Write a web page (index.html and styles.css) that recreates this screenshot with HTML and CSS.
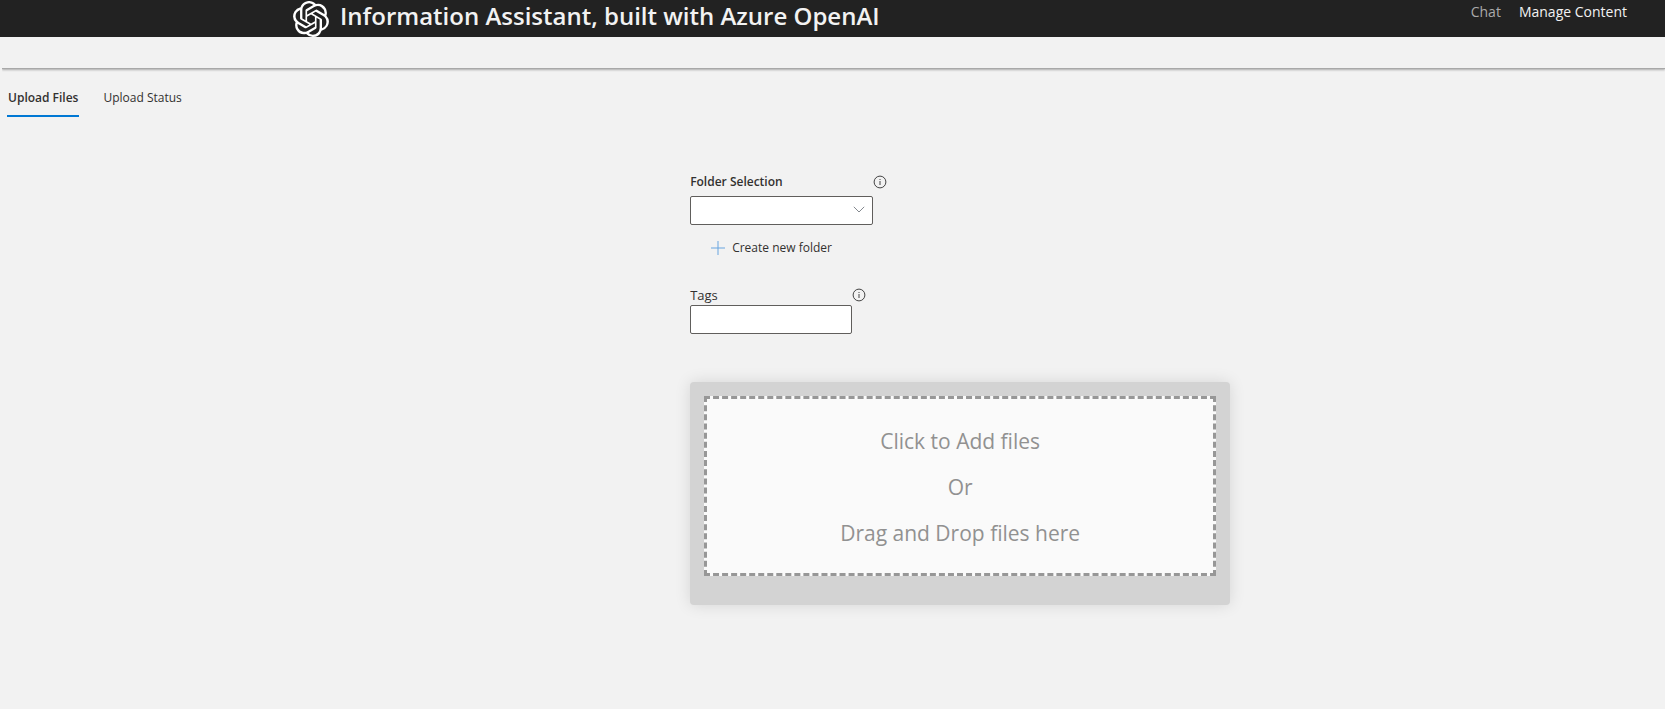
FILE: index.html
```html
<!DOCTYPE html>
<html lang="en">
<head>
<meta charset="utf-8">
<title>Information Assistant</title>
<link rel="stylesheet" href="styles.css">
</head>
<body>
<header class="header">
  <a class="brand" href="#">
    <svg class="logo" viewBox="0 0 24 24" aria-hidden="true"><path fill="currentColor" d="M22.2819 9.8211a5.9847 5.9847 0 0 0-.5157-4.9108 6.0462 6.0462 0 0 0-6.5098-2.9A6.0651 6.0651 0 0 0 4.9807 4.1818a5.9847 5.9847 0 0 0-3.9977 2.9 6.0462 6.0462 0 0 0 .7427 7.0966 5.98 5.98 0 0 0 .511 4.9107 6.051 6.051 0 0 0 6.5146 2.9001A5.9847 5.9847 0 0 0 13.2599 24a6.0557 6.0557 0 0 0 5.7718-4.2058 5.9894 5.9894 0 0 0 3.9977-2.9001 6.0557 6.0557 0 0 0-.7475-7.0729zm-9.022 12.6081a4.4755 4.4755 0 0 1-2.8764-1.0408l.1419-.0804 4.7783-2.7582a.7948.7948 0 0 0 .3927-.6813v-6.7369l2.02 1.1686a.071.071 0 0 1 .038.052v5.5826a4.504 4.504 0 0 1-4.4945 4.4944zm-9.6607-4.1254a4.4708 4.4708 0 0 1-.5346-3.0137l.142.0852 4.783 2.7582a.7712.7712 0 0 0 .7806 0l5.8428-3.3685v2.3324a.0804.0804 0 0 1-.0332.0615L9.74 19.9502a4.4992 4.4992 0 0 1-6.1408-1.6464zM2.3408 7.8956a4.485 4.485 0 0 1 2.3655-1.9728V11.6a.7664.7664 0 0 0 .3879.6765l5.8144 3.3543-2.0201 1.1685a.0757.0757 0 0 1-.071 0l-4.8303-2.7865A4.504 4.504 0 0 1 2.3408 7.872zm16.5963 3.8558L13.1038 8.364 15.1192 7.2a.0757.0757 0 0 1 .071 0l4.8303 2.7913a4.4944 4.4944 0 0 1-.6765 8.1042v-5.6772a.79.79 0 0 0-.407-.667zm2.0107-3.0231l-.142-.0852-4.7735-2.7818a.7759.7759 0 0 0-.7854 0L9.409 9.2297V6.8974a.0662.0662 0 0 1 .0284-.0615l4.8303-2.7866a4.4992 4.4992 0 0 1 6.6802 4.66zM8.3065 12.863l-2.02-1.1638a.0804.0804 0 0 1-.038-.0567V6.0742a4.4992 4.4992 0 0 1 7.3757-3.4537l-.142.0805L8.704 5.459a.7948.7948 0 0 0-.3927.6813zm1.0976-2.3654l2.602-1.4998 2.6069 1.4998v2.9994l-2.5974 1.4997-2.6067-1.4997Z"/></svg>
    <span class="title">Information Assistant, built with Azure OpenAI</span>
  </a>
  <nav class="nav">
    <a class="nav-link" href="#">Chat</a>
    <a class="nav-link nav-link-active" href="#">Manage Content</a>
  </nav>
</header>
<main>
  <div class="strip"></div>
  <div class="tabs" role="tablist">
    <button class="tab tab-active" role="tab" aria-selected="true">Upload Files</button>
    <button class="tab" role="tab" aria-selected="false">Upload Status</button>
  </div>
  <div class="form">
    <div class="field folder">
      <label class="label label-strong" for="folder">Folder Selection</label>
      <button class="info" aria-label="Folder information"><svg viewBox="0 0 14 14"><circle cx="7" cy="7" r="5.9"/><path d="M7 6v4M7 4v1"/></svg></button>
      <div class="select-wrap">
        <select class="box" id="folder"><option></option></select>
        <svg class="chevron" viewBox="0 0 12 7" aria-hidden="true"><path d="M.8.8 6 6 11.2.8"/></svg>
      </div>
    </div>
    <button class="create">
      <svg class="plus" viewBox="0 0 14 14" aria-hidden="true"><path d="M7 0v14M0 7h14"/></svg>
      Create new folder
    </button>
    <div class="field tags">
      <label class="label label-large" for="tags">Tags</label>
      <button class="info" aria-label="Tags information"><svg viewBox="0 0 14 14"><circle cx="7" cy="7" r="5.9"/><path d="M7 6v4M7 4v1"/></svg></button>
      <input class="box" id="tags" type="text">
    </div>
    <div class="drop-card">
      <button class="drop-zone">
        <span>Click to Add files</span>
        <span>Or</span>
        <span>Drag and Drop files here</span>
      </button>
    </div>
  </div>
</main>
</body>
</html>
```
FILE: styles.css
```css
* {
  box-sizing: border-box;
}

body {
  margin: 0;
  background: #f2f2f2;
  color: #323130;
  font-family: "Segoe UI", "Open Sans", "Noto Sans", sans-serif;
  font-size: 12px;
  line-height: 20px;
}

button {
  padding: 0;
  border: 0;
  background: none;
  color: inherit;
  font: inherit;
}

a {
  color: inherit;
  text-decoration: none;
}

.header {
  display: flex;
  justify-content: space-between;
  align-items: flex-start;
  padding: 0 38px 0 17.6%;
  background: #222;
  color: #f2f2f2;
}

.brand {
  display: flex;
  gap: 11px;
  padding-top: 1px;
}

.logo {
  display: block;
  width: 36px;
  height: 36px;
  color: #fff;
}

.title {
  font-size: 24px;
  font-weight: 600;
  line-height: 29px;
}

.nav {
  display: flex;
  gap: 18px;
  padding-top: 2px;
  font-size: 14px;
  font-weight: 500;
}

.nav-link {
  color: #aaa;
}

.nav-link-active {
  color: #f2f2f2;
}

.strip {
  height: 32px;
  margin-left: 2px;
  border-bottom: 1px solid #a8a8a8;
  box-shadow: 0 1px 2px #aaa;
  clip-path: inset(0 0 -4px 0);
}

.tabs {
  display: flex;
  gap: 23px;
  padding: 8px 7px 0;
}

.tab {
  height: 40px;
  padding: 4px 1px 0;
  border-bottom: 2px solid transparent;
}

.tab-active {
  border-color: #0078d4;
  font-weight: 600;
}

.form {
  padding: 55px 0 40px 41.45%;
}

.field {
  display: grid;
  justify-content: start;
  align-items: center;
}

.folder {
  grid-template-columns: 183px 14px;
  row-gap: 4px;
}

.tags {
  grid-template-columns: 162px 14px;
  margin-top: 27px;
}

.label-strong {
  font-weight: 600;
}

.label-large {
  font-size: 13px;
}

.info {
  width: 14px;
  height: 14px;
}

.info svg {
  display: block;
  fill: none;
  stroke: #444;
}

.select-wrap {
  position: relative;
}

.box {
  display: block;
  width: 100%;
  height: 29px;
  padding: 0 8px;
  border: 1px solid #605e5c;
  border-radius: 2px;
  background: #fff;
  font: inherit;
  appearance: none;
}

.chevron {
  position: absolute;
  top: 10px;
  right: 8px;
  width: 12px;
  height: 7px;
  fill: none;
  stroke: #84898f;
  pointer-events: none;
}

.create {
  display: flex;
  align-items: center;
  gap: 7px;
  margin-top: 13px;
  padding-left: 21px;
}

.plus {
  width: 14px;
  height: 14px;
  fill: none;
  stroke: #69a5e0;
}

.drop-card {
  width: 540px;
  max-width: 100%;
  margin-top: 48px;
  padding: 14px 14px 29px;
  border-radius: 4px;
  background: #d3d3d3;
  box-shadow: 0 0 16px rgba(0, 0, 0, 0.12);
}

.drop-zone {
  display: flex;
  flex-direction: column;
  align-items: center;
  justify-content: center;
  gap: 16px;
  width: 100%;
  height: 180px;
  padding-top: 2px;
  border: 3px dashed #979797;
  background: #fafafa;
  color: #919191;
  font-size: 21px;
  line-height: 30px;
}
```
